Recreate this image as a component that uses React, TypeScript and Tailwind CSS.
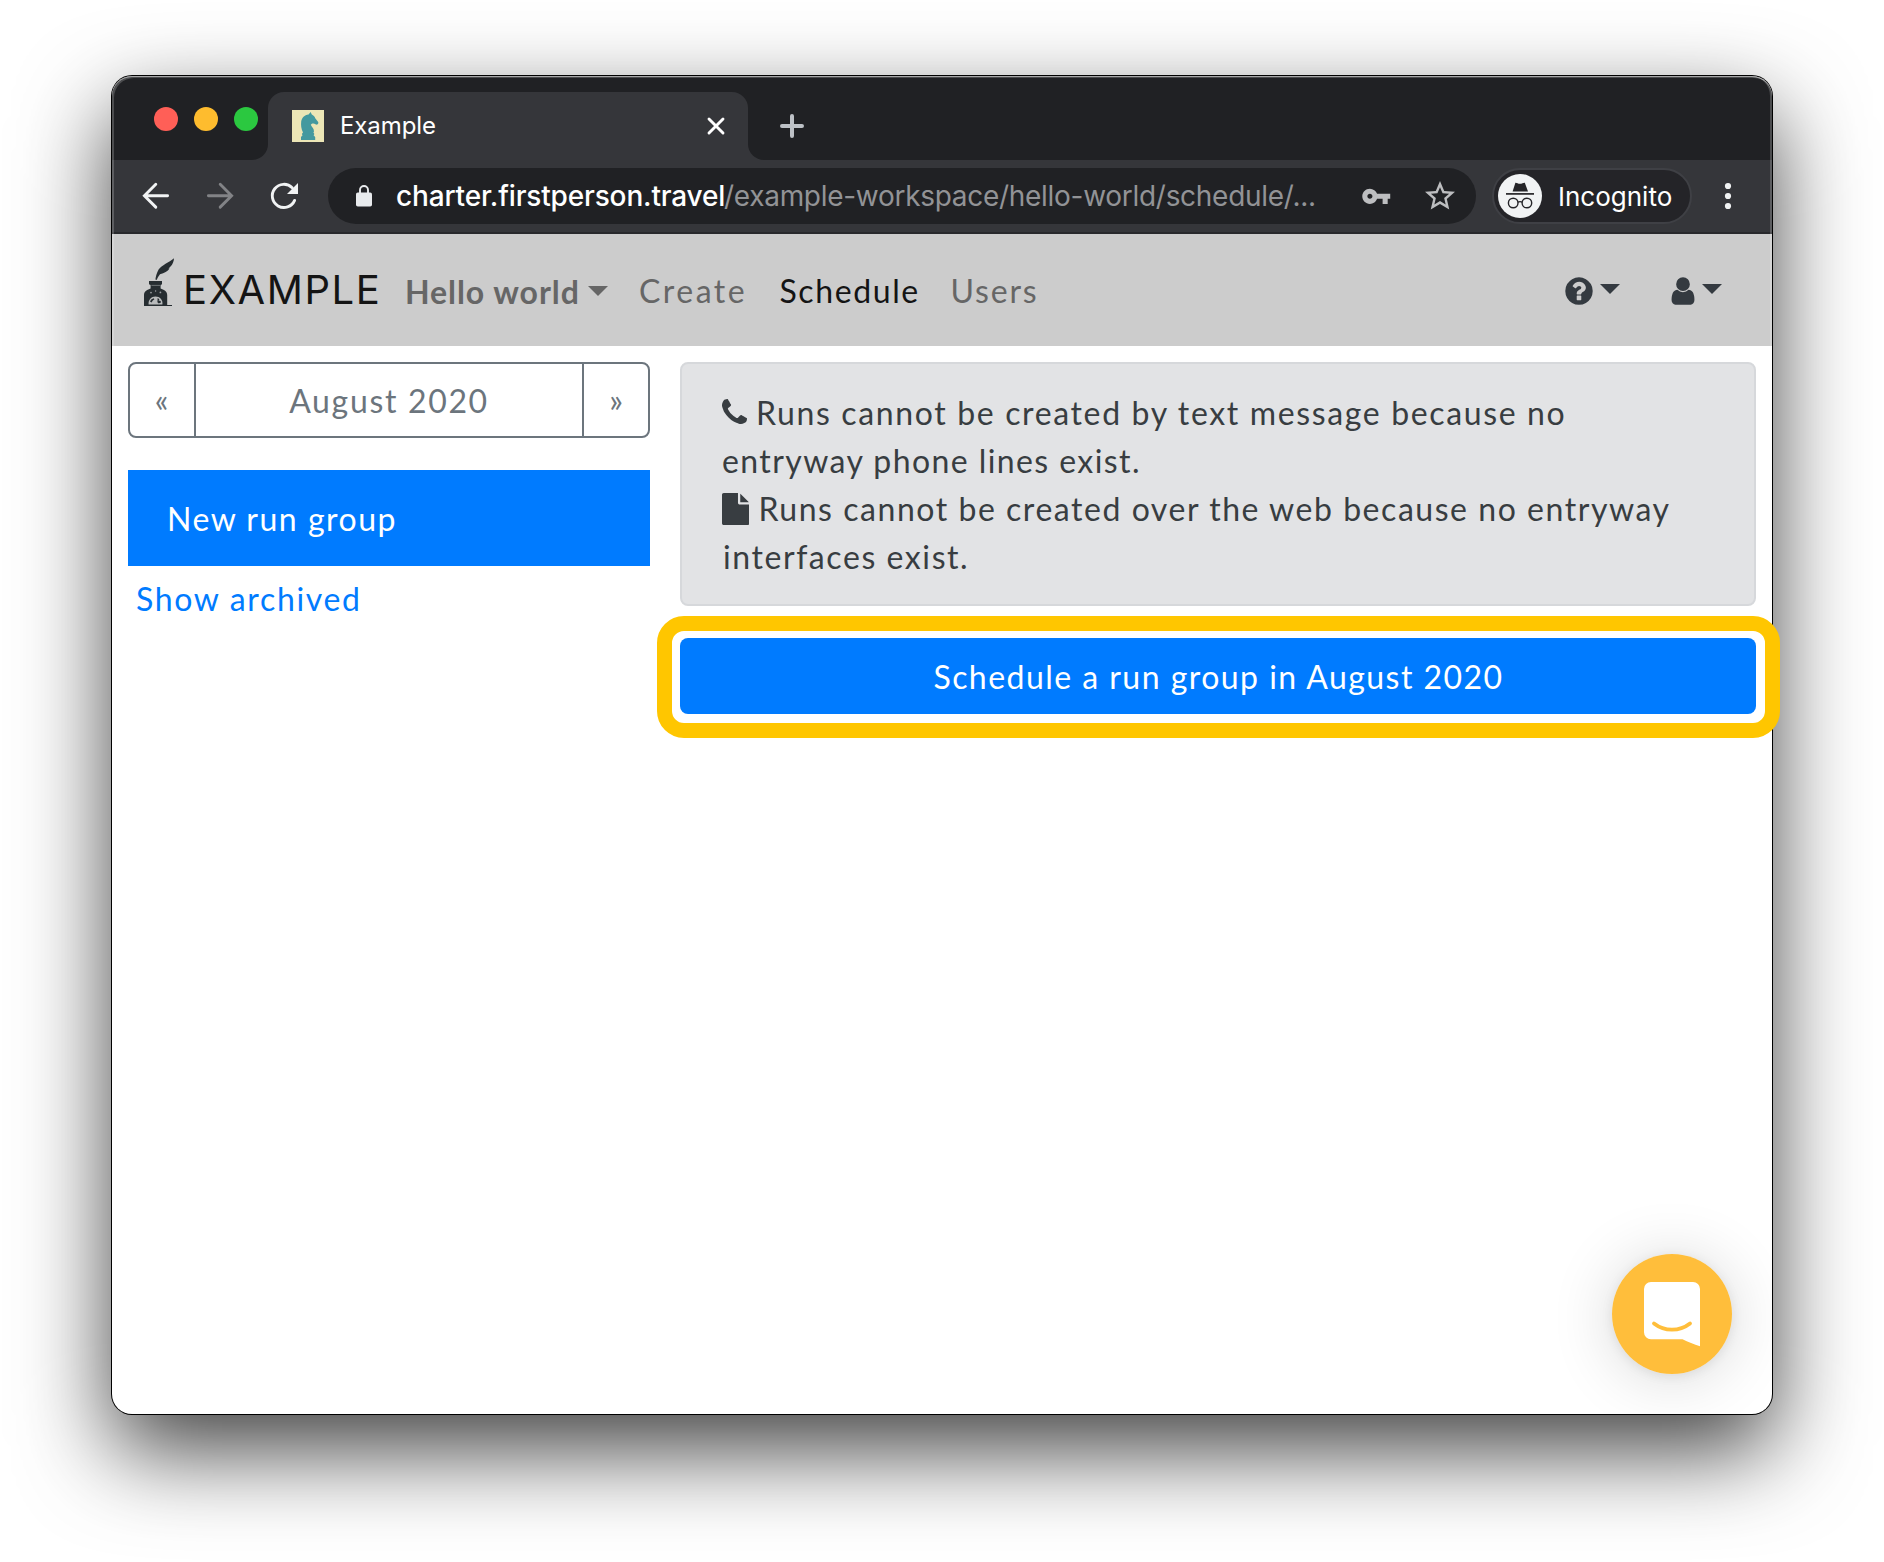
import React from "react";

function Caret({ className }: { className: string }) {
  return <span className={`block h-0 w-0 border-x-[10px] border-t-[10px] border-x-transparent ${className}`} />;
}

function KnightIcon() {
  return (
    <svg viewBox="0 0 32 32" className="h-8 w-8 shrink-0 bg-[#ece6b6]">
      <path
        fill="#43999f"
        d="M18.6 2 L19.8 4.6 C21.4 5.4 22.6 6.6 23.4 8.4 L26.2 12 C26.6 13 26.2 14.2 25 14.6 C23.8 15 23 13.8 21.4 13.6 C20.2 13.6 19.4 14 18.8 14.8 C19.6 16.8 22 18.4 22 21.4 L21.4 22.6 L22.4 24 L21.6 25.2 L23.2 27 V30 H9 V27 L10.6 25.2 L9.8 24 L11 22.4 C9.2 19 8.8 15 9.2 11.6 C9.8 7.6 12.4 5 16.6 4.4 Z"
      />
    </svg>
  );
}

function InkwellLogo() {
  return (
    <svg viewBox="0 0 30 48" className="h-12 w-[30px] shrink-0">
      <path fill="#262d31" d="M30 0.2 C29.6 5.5 27 8.6 24.4 10.4 L25.6 10.6 C23.6 13.4 20.4 15.2 16 16.2 C14.6 18 13.4 19.8 12.6 22 L11.4 21.6 C11.8 18.4 12.6 15 14.6 11.4 C17.6 7.2 25 4.4 30 0.2 Z" />
      <path
        fill="#262d31"
        d="M5 23 H18 V26.2 L16.6 27 V30.4 C19.6 31.4 23.2 33 23.2 37 V47 H28 V48 H0 V37 C0 33 3.6 31.4 6.6 30.4 V27 L5 26.2 Z"
      />
      <path stroke="#8d9092" strokeWidth="0.7" d="M7.4 27.4 H16" />
      <g fill="#9a9da0">
        <circle cx="7" cy="34.6" r="0.9" />
        <circle cx="11.6" cy="33" r="0.7" />
        <circle cx="16.4" cy="34.4" r="0.9" />
      </g>
      <path fill="#b9bbbc" d="M4.6 46.6 C4 41.6 7.4 38.4 11.4 38.4 C15.8 38.4 19 41.6 18.4 46.6 Z" />
      <path fill="#262d31" d="M6 43.6 L7.2 41.4 L9.6 40.2 L10.4 41.2 L8.6 42.8 L7.6 44.4 Z M13.6 40 L15.4 41.2 L14.6 42.4 L16.6 43 L17 44.4 L14.8 45.6 L13.4 44.2 Z" />
    </svg>
  );
}

function TabStrip() {
  return (
    <div className="flex h-[84px] overflow-hidden rounded-t-[20px] bg-[#35363a]">
      <div className="flex w-[156px] items-start gap-4 rounded-br-2xl bg-[#202124] pt-[31px] pl-[42px]">
        <span className="h-6 w-6 shrink-0 rounded-full bg-[#ff5f57]" />
        <span className="h-6 w-6 shrink-0 rounded-full bg-[#febc2e]" />
        <span className="h-6 w-6 shrink-0 rounded-full bg-[#2bc840]" />
      </div>
      <div className="w-[480px] bg-[linear-gradient(#202124_50%,#35363a_50%)] pt-4">
        <div className="flex h-[68px] items-center rounded-t-2xl bg-[#35363a] px-6">
          <KnightIcon />
          <span className="ml-4 text-[24px] leading-8 tracking-[-0.1px] text-white">Example</span>
          <svg viewBox="0 0 16 16" className="ml-auto h-4 w-4 overflow-visible">
            <path d="M1 1L15 15M15 1L1 15" stroke="#ffffff" strokeWidth="2.9" strokeLinecap="round" />
          </svg>
        </div>
      </div>
      <div className="flex-1 rounded-bl-2xl bg-[#202124] pt-[38px] pl-8">
        <svg viewBox="0 0 24 24" className="h-6 w-6">
          <path d="M12 2V22M2 12H22" stroke="#bdc1c6" strokeWidth="4" strokeLinecap="round" />
        </svg>
      </div>
    </div>
  );
}

function Toolbar() {
  return (
    <div className="flex h-[74px] items-center border-b-2 border-[#28292c] bg-[#35363a] pl-7">
      <div className="flex gap-8">
        <svg viewBox="0 0 32 32" className="h-8 w-8" fill="none" stroke="#f1f3f4" strokeWidth="2.9" strokeLinecap="round">
          <path d="M27.6 15.7H5M15.8 4.3L4.4 15.7L15.8 27.1" />
        </svg>
        <svg viewBox="0 0 32 32" className="h-8 w-8" fill="none" stroke="#828386" strokeWidth="2.9" strokeLinecap="round">
          <path d="M4.4 15.7H27M16.2 4.3L27.6 15.7L16.2 27.1" />
        </svg>
        <svg viewBox="0 0 32 32" className="h-8 w-8">
          <path d="M26.6 20.4A11.6 11.6 0 1 1 24.2 7.8" fill="none" stroke="#f1f3f4" strokeWidth="2.9" strokeLinecap="round" />
          <path d="M30 3V14H19Z" fill="#f1f3f4" />
        </svg>
      </div>
      <div className="ml-7 flex h-14 w-[1148px] items-center rounded-full bg-[#202124] pr-[18px] pl-7">
        <svg viewBox="0 0 16 22" className="h-[22px] w-4 shrink-0">
          <rect x="0" y="7.5" width="16" height="14" rx="1.8" fill="#e8eaed" />
          <path d="M4 8.5V5A4 4 0 0 1 12 5V8.5" fill="none" stroke="#e8eaed" strokeWidth="1.9" />
        </svg>
        <div className="ml-6 text-[28px] leading-10 whitespace-nowrap">
          <span className="inline-block w-[328px] font-medium tracking-[-0.16px] text-white">charter.firstperson.travel</span>
          <span className="tracking-[-0.29px] text-[#929396]">/example-workspace/hello-world/schedule/...</span>
        </div>
        <svg viewBox="0 0 24 24" className="ml-auto h-[30.5px] w-[30.5px]" fill="#bdbec0">
          <path d="M12.65 10C11.83 7.67 9.61 6 7 6c-3.31 0-6 2.69-6 6s2.69 6 6 6c2.61 0 4.83-1.67 5.65-4H17v4h4v-4h2v-4H12.65zM7 14c-1.1 0-2-.9-2-2s.9-2 2-2 2 .9 2 2-.9 2-2 2z" />
        </svg>
        <svg viewBox="0 0 24 24" className="ml-[31px] h-9 w-9" fill="#bdbec0">
          <path d="M22 9.24l-7.19-.62L12 2 9.19 8.63 2 9.24l5.46 4.73L5.82 21 12 17.27 18.18 21l-1.63-7.03L22 9.24zM12 15.4l-3.76 2.27 1-4.28-3.32-2.88 4.38-.38L12 6.1l1.71 4.04 4.38.38-3.32 2.88 1 4.28L12 15.4z" />
        </svg>
      </div>
      <div className="ml-4 flex h-14 w-[200px] items-center rounded-full border-2 border-[#3f4045] bg-[#242428] pl-1">
        <svg viewBox="0 0 44 44" className="h-11 w-11 shrink-0">
          <circle cx="22" cy="22" r="22" fill="#f1f3f4" />
          <path d="M17.4 8.8C18.2 8.4 20 9.8 22 9.8S25.8 8.4 26.8 8.8L30 17.4H14.6Z" fill="#242428" />
          <path d="M8 19.9H36" stroke="#242428" strokeWidth="1.7" />
          <g fill="none" stroke="#242428" strokeWidth="1.4">
            <circle cx="15.2" cy="29" r="4.8" />
            <circle cx="28.9" cy="29" r="4.8" />
            <path d="M19.9 28.2C21.3 27.4 22.8 27.4 24.2 28.2" />
          </g>
        </svg>
        <span className="ml-4 pt-0.5 text-[26px] leading-8 text-white">Incognito</span>
      </div>
      <svg viewBox="0 0 8 28" className="ml-8 h-7 w-2" fill="#f1f3f4">
        <circle cx="4" cy="4" r="3.1" />
        <circle cx="4" cy="14" r="3.1" />
        <circle cx="4" cy="24" r="3.1" />
      </svg>
    </div>
  );
}

function Navbar() {
  return (
    <nav className="flex h-28 items-start bg-[#cccccc] pr-[50px] pl-8 font-['Lato',sans-serif] text-[32px] leading-[48px] text-[#666666]">
      <div className="pt-6">
        <InkwellLogo />
      </div>
      <span className="ml-[9px] w-[222px] pt-8 font-['Inter',sans-serif] text-[40px] tracking-[1.6px] text-[#141414]">EXAMPLE</span>
      <span className="w-[183px] pt-[34px] font-bold tracking-[0.93px]">Hello world</span>
      <Caret className="mt-[52px] border-t-[#666666]" />
      <span className="ml-[31px] w-[140.5px] pt-[33px] tracking-[2.5px]">Create</span>
      <span className="w-[171px] pt-[33px] tracking-[1.6px] text-[#141414]">Schedule</span>
      <span className="pt-[33px] tracking-[1.8px]">Users</span>
      <div className="ml-auto flex pt-[41px]">
        <svg viewBox="0 0 1792 1792" className="h-8 w-8" fill="#343a40">
          <path d="M1024 1376v-192q0-14-9-23t-23-9h-192q-14 0-23 9t-9 23v192q0 14 9 23t23 9h192q14 0 23-9t9-23zM1280 704q0-88-55.5-163t-138.5-116-170-41q-243 0-371 213-15 24 8 42l132 100q7 6 19 6 16 0 25-12 53-68 86-92 34-24 86-24 48 0 85.5 26t37.5 59q0 38-20 61t-68 45q-63 28-115.5 86.5t-52.5 125.5v36q0 14 9 23t23 9h192q14 0 23-9t9-23q0-19 21.5-49.5t54.5-49.5q32-18 49-28.5t46-35 44.5-48 28-60.5 12.5-81zM1664 896q0 209-103 385.5t-279.5 279.5-385.5 103-385.5-103-279.5-279.5-103-385.5 103-385.5 279.5-279.5 385.5-103 385.5 103 279.5 279.5 103 385.5z" />
        </svg>
        <Caret className="mt-[9px] ml-[5px] border-t-[#343a40]" />
        <svg viewBox="0 0 1792 1792" className="ml-[47px] h-8 w-8" fill="#343a40">
          <path d="M1536 1399q0 109-62.5 187t-150.5 78h-854q-88 0-150.5-78t-62.5-187q0-85 8.5-160.5t31.5-152 58.5-131 94-89 134.5-34.5q131 128 313 128t313-128q76 0 134.5 34.5t94 89 58.5 131 31.5 152 8.5 160.5zm-256-887q0 159-112.5 271.5t-271.5 112.5-271.5-112.5-112.5-271.5 112.5-271.5 271.5-112.5 271.5 112.5 112.5 271.5z" />
        </svg>
        <Caret className="mt-[9px] ml-[3px] border-t-[#343a40]" />
      </div>
    </nav>
  );
}

function Sidebar() {
  return (
    <div className="w-[522px]">
      <div className="flex h-[76px] rounded-lg border-2 border-[#6c757d] text-center leading-[74px] text-[#6c757d]">
        <span className="w-[66px] border-r-2 border-[#6c757d] pr-px leading-[72px]">«</span>
        <span className="flex-1 tracking-[1.67px]">August 2020</span>
        <span className="w-[66px] border-l-2 border-[#6c757d] leading-[72px]">»</span>
      </div>
      <div className="mt-8 bg-[#007bff] pt-[25px] pb-[23px] pl-[39px] tracking-[1.5px] text-white">New run group</div>
      <a className="mt-[9px] block pl-2 tracking-[1.65px] text-[#007bff]">Show archived</a>
    </div>
  );
}

function Main() {
  return (
    <div className="w-[1076px]">
      <div className="rounded-lg border-2 border-[#d6d8db] bg-[#e2e3e5] pt-[25px] pb-[23px] pl-10 whitespace-nowrap text-[#383d41]">
        <div>
          <svg viewBox="192 128 1408 1408" className="mr-[9px] inline-block h-[25px] w-[25px] align-[1px]" fill="#383d41">
            <path d="M1600 1240q0 27-10 70.5t-21 68.5q-21 50-122 106-94 51-186 51-27 0-53-3.5t-57.5-12.5-47-14.5-55.5-20.5-49-18q-98-35-175-83-127-79-264-216t-216-264q-48-77-83-175-3-9-18-49t-20.5-55.5-14.5-47-12.5-57.5-3.5-53q0-92 51-186 56-101 106-122 25-11 68.5-21t70.5-10q14 0 21 3 18 6 53 76 11 19 30 54t35 63.5 31 53.5q3 4 17.5 25t21.5 35.5 7 28.5q0 20-28.5 50t-62 55-62 53-28.5 46q0 9 5 22.5t8.5 20.5 14 24 11.5 19q76 137 174 235t235 174q2 1 19 11.5t24 14 20.5 8.5 22.5 5q18 0 46-28.5t53-62 55-62 50-28.5q14 0 28.5 7t35.5 21.5 25 17.5q25 15 53.5 31t63.5 35 54 30q70 35 76 53 3 7 3 21z" />
          </svg>
          <span className="tracking-[1.64px]">Runs cannot be created by text message because no</span>
          <br />
          <span className="tracking-[1.42px]">entryway phone lines exist.</span>
        </div>
        <div>
          <svg viewBox="128 0 1536 1792" className="mr-[9px] inline-block h-8 w-[27.4px] align-[-3.5px]" fill="#383d41">
            <path d="M1152 512v-472q22 14 36 28l408 408q14 14 28 36h-472zm-128 32q0 40 28 68t68 28h544v1056q0 40-28 68t-68 28h-1344q-40 0-68-28t-28-68v-1600q0-40 28-68t68-28h800v544z" />
          </svg>
          <span className="tracking-[1.54px]">Runs cannot be created over the web because no entryway</span>
          <br />
          <span className="pl-px tracking-[1.58px]">interfaces exist.</span>
        </div>
      </div>
      <div className="relative mt-8 h-[76px] rounded-lg bg-[#007bff] pt-[15px] pl-px text-center tracking-[1.46px] text-white">
        Schedule a run group in August 2020
        <span className="absolute -top-[22.5px] -right-6 -bottom-[23.5px] -left-[23.5px] rounded-[27px] border-[15px] border-[#ffc600]" />
      </div>
    </div>
  );
}

function ChatLauncher() {
  return (
    <div className="absolute right-10 bottom-10 h-[120px] w-[120px] rounded-full bg-[#ffbe3b] shadow-[0_2px_12px_rgba(0,0,0,0.08)]">
      <svg viewBox="0 0 120 120" className="h-full w-full">
        <path d="M39 28H81A7 7 0 0 1 88 35V92.3C82 90.4 76 88 70.5 85.3H39A7 7 0 0 1 32 78.3V35A7 7 0 0 1 39 28Z" fill="#ffffff" />
        <path d="M42 69.4C52.5 77.6 67.5 77.6 78 69.4" fill="none" stroke="#ffbe3b" strokeWidth="3.8" strokeLinecap="round" />
      </svg>
    </div>
  );
}

export default function App() {
  return (
    <div className="h-[1562px] w-[1884px] overflow-hidden bg-white pt-[76px] pl-28 font-['Inter',sans-serif]">
      <div className="relative h-[1338px] w-[1660px] rounded-[20px] bg-white shadow-[0_0_0_1px_#000000,0_36px_92px_rgba(0,0,0,0.75)]">
        <TabStrip />
        <Toolbar />
        <Navbar />
        <div className="flex items-start gap-[30px] p-4 font-['Lato',sans-serif] text-[32px] leading-[48px]">
          <Sidebar />
          <Main />
        </div>
        <div className="pointer-events-none absolute inset-x-0 top-0 h-[270px] rounded-t-[20px] shadow-[inset_0_1px_0_rgba(255,255,255,0.5),inset_2px_2px_0_rgba(255,255,255,0.2),inset_-2px_0_0_rgba(255,255,255,0.2)]" />
        <div className="pointer-events-none absolute inset-0 overflow-hidden rounded-[20px]">
          <div className="absolute right-10 bottom-10 h-[120px] w-[120px] rounded-full shadow-[0_4px_64px_rgba(0,0,0,0.16)]" />
        </div>
        <ChatLauncher />
      </div>
    </div>
  );
}
